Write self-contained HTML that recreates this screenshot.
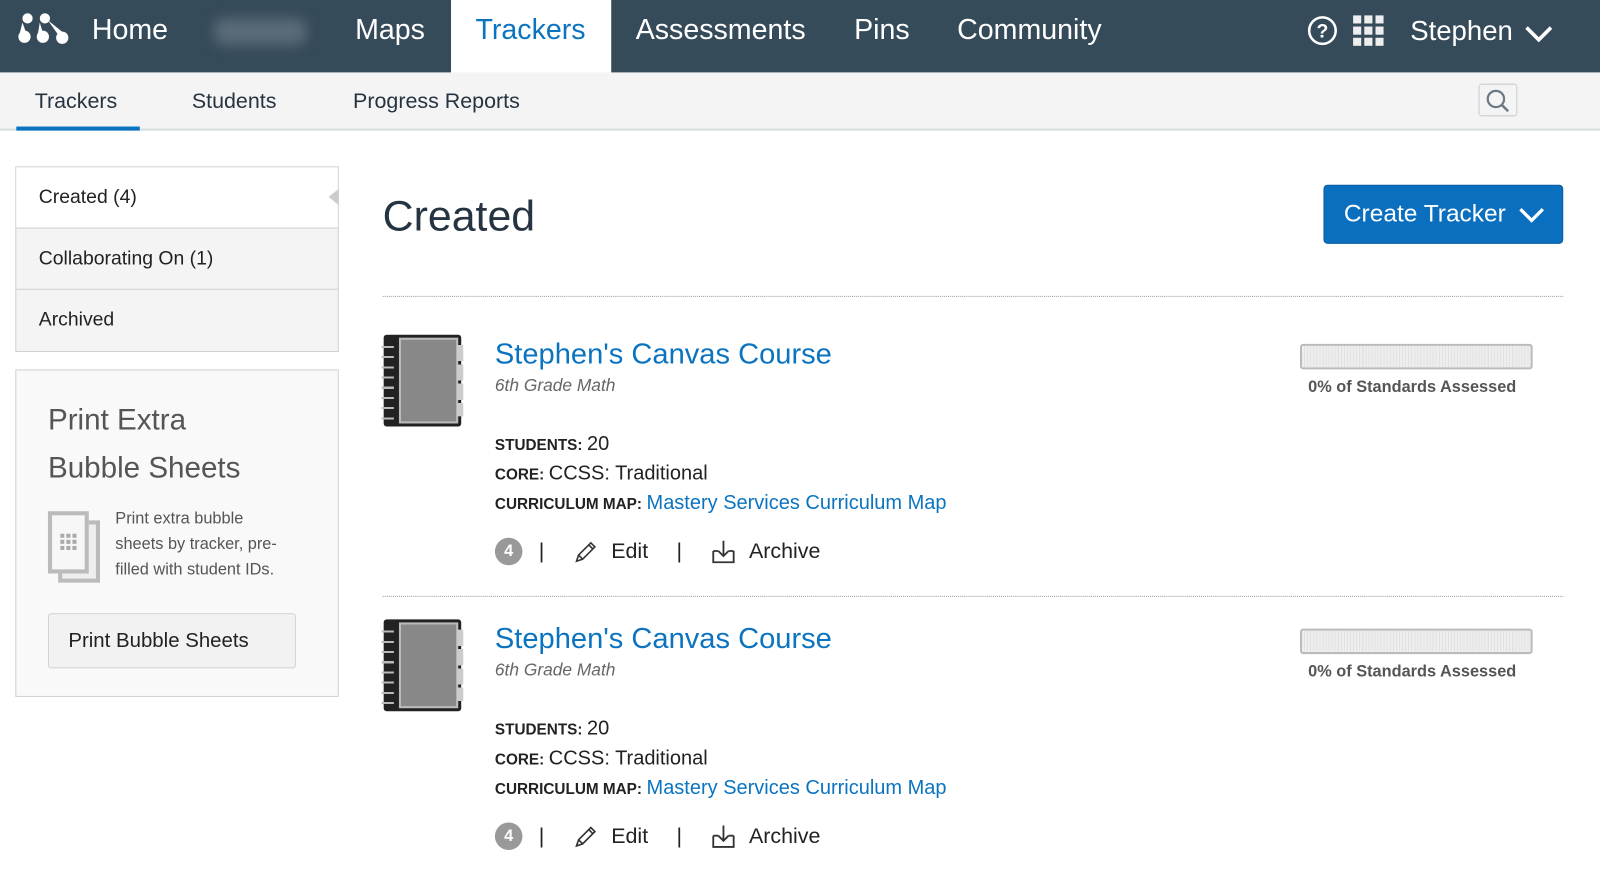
<!DOCTYPE html>
<html><head><meta charset="utf-8"><style>
*{box-sizing:border-box;margin:0;padding:0}
body{width:1600px;height:881px;overflow:hidden;background:#fff;font-family:"Liberation Sans",sans-serif;color:#222;position:relative}
#w{position:absolute;left:0;top:0;width:1568px;height:864px;transform:scale(1.0204);transform-origin:0 0}
.a{position:absolute;white-space:nowrap}
.nav{position:absolute;left:0;top:0;width:1600px;height:71px;background:#364b5a}
.nt{color:#fff;font-size:28px;top:13px}
.sub{position:absolute;top:71px;left:0;width:1600px;height:57px;background:#f4f4f4;border-bottom:2px solid #d8dde0}
.st{font-size:21px;color:#263442;top:88px}
.side{position:absolute;left:15px;width:317px;border:1px solid #ccd2d6;background:#f4f4f4;font-size:19px;color:#222}
.side div{height:60px;line-height:60px;padding-left:22px;border-bottom:1px solid #ccd2d6}
.lbl{font-size:15px;font-weight:bold;color:#222}
.val{font-size:19.6px;color:#222}
.blue{color:#0b74c0}
.val.blue{color:#0b74c0}
.bar{position:absolute;width:228px;height:25px;border:2px solid #bbb;border-radius:3px;background:repeating-linear-gradient(90deg,#eee 0 2px,#e2e2e2 2px 3px)}
.sa{font-size:16px;font-weight:bold;color:#555}
.act{font-size:21px;color:#222}
.badge{width:27px;height:27px;border-radius:50%;background:#999;color:#fff;font-weight:bold;font-size:16px;text-align:center;line-height:27px}
.hr{position:absolute;left:375px;width:1157px;border-top:1px dotted #999}
.ttl{font-size:28.5px}
</style></head><body><div id="w">
<div class="nav"></div>
<svg class="a" style="left:17px;top:12px" width="52" height="34" viewBox="0 0 52 34"><g fill="#fff"><circle cx="10" cy="6" r="5"/><circle cx="27" cy="6" r="5"/><circle cx="7" cy="24" r="6"/><circle cx="25" cy="24" r="6"/><circle cx="44" cy="25" r="6"/><path d="M5 10 L10 24 L2 22Z"/><path d="M22 10 L26 24 L20 22Z"/><path d="M30 8 L45 20 L40 22Z"/></g></svg>
<div class="a nt" style="left:90px">Home</div>
<div class="a" style="left:210px;top:18px;width:90px;height:26px;background:#5a6b77;filter:blur(6px);border-radius:10px"></div>
<div class="a nt" style="left:348px">Maps</div>
<div class="a" style="left:442px;top:0;width:157px;height:72px;background:#fff"></div>
<div class="a nt" style="left:466px;color:#0b74c0">Trackers</div>
<div class="a nt" style="left:623px">Assessments</div>
<div class="a nt" style="left:837px">Pins</div>
<div class="a nt" style="left:938px">Community</div>
<svg class="a" style="left:1281px;top:15px" width="30" height="30"><circle cx="15" cy="15" r="13" fill="none" stroke="#fff" stroke-width="2.5"/><text x="15" y="22" text-anchor="middle" fill="#fff" font-size="19" font-weight="bold" font-family="Liberation Sans">?</text></svg>
<svg class="a" style="left:1326px;top:15px" width="30" height="30" fill="#eee"><rect x="0" y="0" width="8" height="8"/><rect x="11" y="0" width="8" height="8"/><rect x="22" y="0" width="8" height="8"/><rect x="0" y="11" width="8" height="8"/><rect x="11" y="11" width="8" height="8"/><rect x="22" y="11" width="8" height="8"/><rect x="0" y="22" width="8" height="8"/><rect x="11" y="22" width="8" height="8"/><rect x="22" y="22" width="8" height="8"/></svg>
<div class="a nt" style="left:1382px;top:15px;font-size:27px">Stephen</div>
<svg class="a" style="left:1494px;top:24px" width="28" height="18"><path d="M2 3 L14 15 L26 3" fill="none" stroke="#fff" stroke-width="3.5"/></svg>
<div class="sub"></div>
<div class="a st" style="left:34px">Trackers</div>
<div class="a" style="left:16px;top:124px;width:121px;height:4px;background:#0b74c0"></div>
<div class="a st" style="left:188px">Students</div>
<div class="a st" style="left:346px">Progress Reports</div>
<div class="a" style="left:1449px;top:82px;width:38px;height:32px;border:1px solid #c8cdd0;border-radius:3px"></div>
<svg class="a" style="left:1455px;top:86px" width="26" height="26"><circle cx="11" cy="11" r="8" fill="none" stroke="#6b7a85" stroke-width="2.2"/><path d="M17 17 L23 23" stroke="#6b7a85" stroke-width="2.5"/></svg>

<div class="side" style="top:163px"><div style="background:#fff">Created (4)</div><div>Collaborating On (1)</div><div style="border-bottom:0">Archived</div></div>
<div class="a" style="left:322px;top:185px;width:0;height:0;border-top:8px solid transparent;border-bottom:8px solid transparent;border-right:10px solid #ccc"></div>
<div class="side" style="top:362px;height:321px;background:#f9f9f9"></div>
<div class="a" style="left:47px;top:389px;font-size:29px;color:#555;line-height:47px">Print Extra<br>Bubble Sheets</div>
<div class="a" style="left:57px;top:510px;width:41px;height:61px;border:4px solid #bbb;background:#eee"></div>
<div class="a" style="left:47px;top:501px;width:40px;height:61px;border:4px solid #bbb;background:#f7f7f7"></div>
<svg class="a" style="left:59px;top:523px" width="16" height="16" fill="#aaa"><rect x="0" y="0" width="4" height="4"/><rect x="6" y="0" width="4" height="4"/><rect x="12" y="0" width="4" height="4"/><rect x="0" y="6" width="4" height="4"/><rect x="6" y="6" width="4" height="4"/><rect x="12" y="6" width="4" height="4"/><rect x="0" y="12" width="4" height="4"/><rect x="6" y="12" width="4" height="4"/><rect x="12" y="12" width="4" height="4"/></svg>
<div class="a" style="left:113px;top:496px;font-size:16px;color:#555;line-height:25px">Print extra bubble<br>sheets by tracker, pre-<br>filled with student IDs.</div>
<div class="a" style="left:47px;top:601px;width:243px;height:54px;border:1px solid #d3d3d3;border-radius:3px;background:#f2f2f2;font-size:20px;line-height:52px;padding-left:19px;color:#222">Print Bubble Sheets</div>

<div class="a" style="left:375px;top:188px;font-size:42px;color:#263442">Created</div>
<div class="a" style="left:1297px;top:181px;width:235px;height:58px;background:#0b6fbf;border:1px solid #0a5d9f;border-radius:4px;color:#fff;font-size:24px;line-height:56px;padding-left:19px">Create Tracker</div>
<svg class="a" style="left:1488px;top:202px" width="26" height="18"><path d="M2 3 L13 14 L24 3" fill="none" stroke="#fff" stroke-width="3.2"/></svg>
<div class="hr" style="top:290px"></div>
<div class="hr" style="top:584px"></div>

<!-- item 1 -->
<div class="a" style="left:374px;top:328px;width:80px;height:90px">
<div class="a" style="left:2px;top:0;width:76px;height:90px;background:#222;border-radius:3px"></div>
<div class="a" style="left:17px;top:3px;width:58px;height:84px;background:#888;border:2px solid #bbb"></div>
<div class="a" style="left:74px;top:10px;width:6px;height:70px;background:repeating-linear-gradient(#ccc 0 16px,transparent 16px 19px)"></div>
<div class="a" style="left:0;top:6px;width:12px;height:78px;background:repeating-linear-gradient(transparent 0 5px,#bbb 5px 7px,transparent 7px 10px)"></div>
</div>
<div class="a blue ttl" style="left:485px;top:331px">Stephen's Canvas Course</div>
<div class="a" style="left:485px;top:368px;font-size:17px;font-style:italic;color:#666">6th Grade Math</div>
<div class="a" style="left:485px;top:424px"><span class="lbl">STUDENTS:</span> <span class="val">20</span></div>
<div class="a" style="left:485px;top:453px"><span class="lbl">CORE:</span> <span class="val">CCSS: Traditional</span></div>
<div class="a" style="left:485px;top:482px"><span class="lbl">CURRICULUM MAP:</span> <span class="val blue">Mastery Services Curriculum Map</span></div>
<div class="a badge" style="left:485px;top:527px">4</div>
<div class="a act" style="left:528px;top:529px">|</div>
<svg class="a" style="left:562px;top:529px" width="24" height="24"><path d="M3 21 L5 15 L17 3 L21 7 L9 19 Z M5 15 L9 19 M15 5 L19 9" fill="none" stroke="#333" stroke-width="1.6"/></svg>
<div class="a act" style="left:599px;top:529px">Edit</div>
<div class="a act" style="left:663px;top:529px">|</div>
<svg class="a" style="left:696px;top:528px" width="26" height="26"><path d="M3 12 V23 H23 V12 M8 12 H3 M18 12 H23 M13 2 V17 M8 12 L13 17 L18 12" fill="none" stroke="#333" stroke-width="1.8"/></svg>
<div class="a act" style="left:734px;top:529px">Archive</div>
<div class="bar" style="left:1274px;top:337px"></div>
<div class="a sa" style="left:1282px;top:371px">0% of Standards Assessed</div>

<!-- item 2 -->
<div class="a" style="left:374px;top:607px;width:80px;height:90px">
<div class="a" style="left:2px;top:0;width:76px;height:90px;background:#222;border-radius:3px"></div>
<div class="a" style="left:17px;top:3px;width:58px;height:84px;background:#888;border:2px solid #bbb"></div>
<div class="a" style="left:74px;top:10px;width:6px;height:70px;background:repeating-linear-gradient(#ccc 0 16px,transparent 16px 19px)"></div>
<div class="a" style="left:0;top:6px;width:12px;height:78px;background:repeating-linear-gradient(transparent 0 5px,#bbb 5px 7px,transparent 7px 10px)"></div>
</div>
<div class="a blue ttl" style="left:485px;top:610px">Stephen's Canvas Course</div>
<div class="a" style="left:485px;top:647px;font-size:17px;font-style:italic;color:#666">6th Grade Math</div>
<div class="a" style="left:485px;top:703px"><span class="lbl">STUDENTS:</span> <span class="val">20</span></div>
<div class="a" style="left:485px;top:732px"><span class="lbl">CORE:</span> <span class="val">CCSS: Traditional</span></div>
<div class="a" style="left:485px;top:761px"><span class="lbl">CURRICULUM MAP:</span> <span class="val blue">Mastery Services Curriculum Map</span></div>
<div class="a badge" style="left:485px;top:806px">4</div>
<div class="a act" style="left:528px;top:808px">|</div>
<svg class="a" style="left:562px;top:808px" width="24" height="24"><path d="M3 21 L5 15 L17 3 L21 7 L9 19 Z M5 15 L9 19 M15 5 L19 9" fill="none" stroke="#333" stroke-width="1.6"/></svg>
<div class="a act" style="left:599px;top:808px">Edit</div>
<div class="a act" style="left:663px;top:808px">|</div>
<svg class="a" style="left:696px;top:807px" width="26" height="26"><path d="M3 12 V23 H23 V12 M8 12 H3 M18 12 H23 M13 2 V17 M8 12 L13 17 L18 12" fill="none" stroke="#333" stroke-width="1.8"/></svg>
<div class="a act" style="left:734px;top:808px">Archive</div>
<div class="bar" style="left:1274px;top:616px"></div>
<div class="a sa" style="left:1282px;top:650px">0% of Standards Assessed</div>
</div></body></html>
